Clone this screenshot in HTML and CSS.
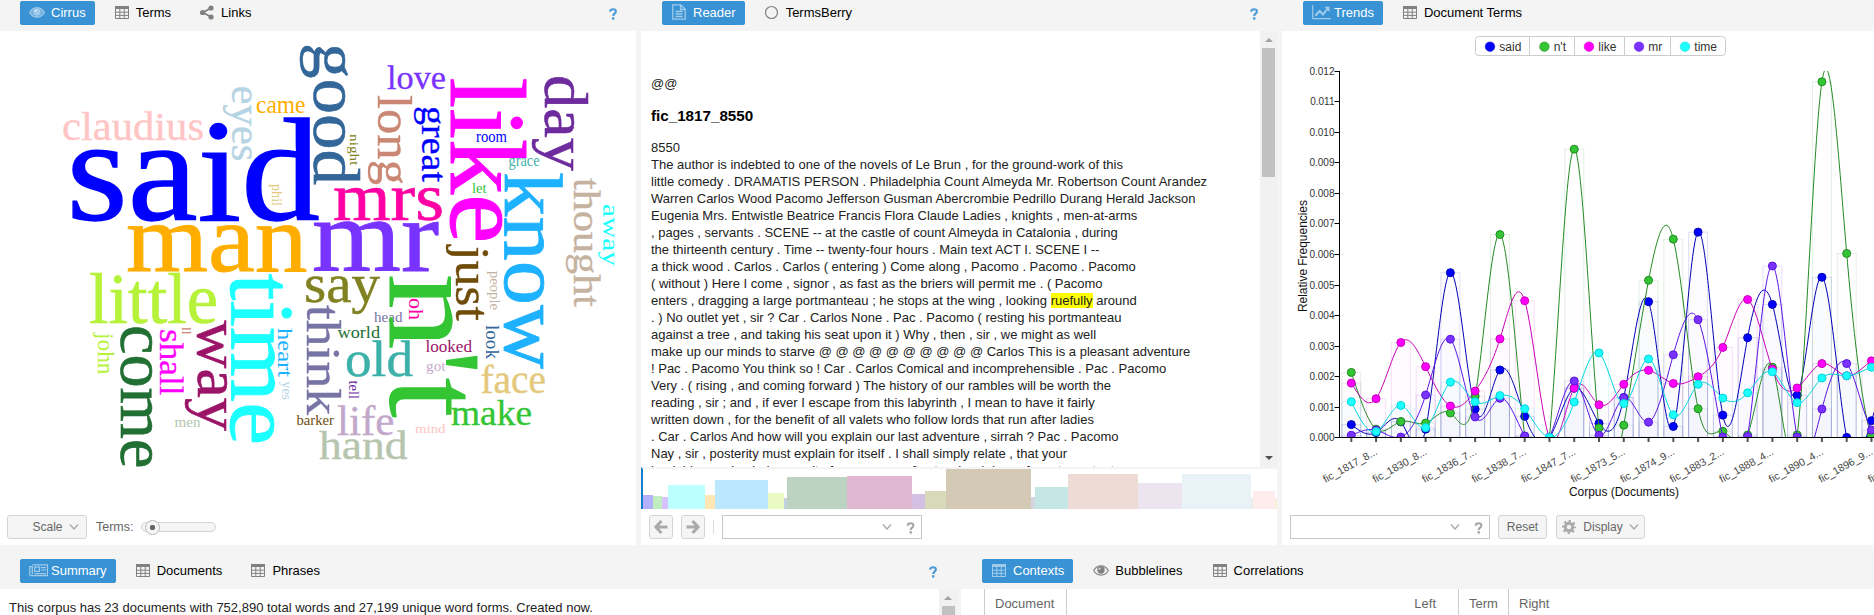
FILE: index.html
```html
<!DOCTYPE html>
<html lang="en">
<head>
<meta charset="utf-8">
<title>Corpus Tools</title>
<link rel="stylesheet" href="styles.css">
</head>
<body>
<svg class="defs" width="0" height="0">
  <symbol id="i-table" viewBox="0 0 16 16"><rect x="1" y="2" width="14" height="3" fill="currentColor"/><path d="M1.5 2.5h13v12h-13zM1.5 8.2h13M1.5 11.4h13M5.8 4v10.5M10.2 4v10.5" fill="none" stroke="currentColor" stroke-width="1"/></symbol>
  <symbol id="i-eye" viewBox="0 0 16 16"><path d="M0 8.5C2 5 5 3.2 8 3.2s6 1.800 8 5.300c-2 3.500-5 5.200-8 5.200S2 12 0 8.500z" fill="currentColor" opacity=".55"/><path d="M.7 8.500C2.500 5.300 5 3.800 8 3.800s5.500 1.500 7.300 4.700c-1.800 3.200-4.300 4.600-7.300 4.600S2.500 11.700.7 8.500z" fill="none" stroke="currentColor" stroke-width="1.100"/><circle cx="8" cy="8" r="3.600" fill="currentColor"/><path d="M6 8a2 2 0 0 1 2-2" fill="none" stroke="#fff" stroke-width=".8"/></symbol>
  <symbol id="i-eye2" viewBox="0 0 16 16"><path d="M.7 8.500C2.500 5.300 5 3.800 8 3.800s5.500 1.500 7.300 4.700c-1.800 3.200-4.300 4.600-7.300 4.600S2.500 11.700.7 8.500z" fill="none" stroke="currentColor" stroke-width="1.200"/><circle cx="8" cy="8" r="3.700" fill="currentColor"/><path d="M6 8a2 2 0 0 1 2-2" fill="none" stroke="#fff" stroke-width=".9"/></symbol>
  <symbol id="i-share" viewBox="0 0 16 16"><path d="M12 4L4 8.500l8 4.500" fill="none" stroke="currentColor" stroke-width="1.800"/><circle cx="12" cy="4" r="2.600" fill="currentColor"/><circle cx="3.600" cy="8.500" r="2.600" fill="currentColor"/><circle cx="12" cy="13" r="2.600" fill="currentColor"/></symbol>
  <symbol id="i-doc" viewBox="0 0 16 16"><path d="M1.800.8h8l4.400 4.400v10H1.800zM9.500 1v4.500H14M4.500 7.500h7M4.500 10h7M4.500 12.500h7" fill="none" stroke="currentColor" stroke-width="1.300"/></symbol>
  <symbol id="i-circle" viewBox="0 0 16 16"><circle cx="7.500" cy="8.500" r="6" fill="none" stroke="currentColor" stroke-width="1.200"/></symbol>
  <symbol id="i-chart" viewBox="0 0 20 16"><path d="M.8 1v14H20" fill="none" stroke="currentColor" stroke-width="1.300"/><path d="M3.500 12l4.500-5 3.500 3.500 5-6" fill="none" stroke="currentColor" stroke-width="2.200"/><path d="M13 2.500h5.500V8z" fill="currentColor"/></symbol>
  <symbol id="i-news" viewBox="0 0 20 16"><path d="M3.500 2.500h16v11.500H2.500a1.500 1.500 0 0 1-1.700-1.500V4.500h2.700v8" fill="none" stroke="currentColor" stroke-width="1.300"/><path d="M6 5h5v4.500H6zM12.500 5.500H18M12.500 8H18M6 11.700h12" fill="none" stroke="currentColor" stroke-width="1.300"/></symbol>
  <symbol id="i-help" viewBox="0 0 8 12"><path d="M1 3.600C1.300 1.900 2.400 1.200 4 1.200c1.800 0 2.900.9 2.900 2.300 0 2.200-2.700 2.100-2.700 4.500" fill="none" stroke="currentColor" stroke-width="2.100"/><rect x="3" y="9.200" width="2.400" height="2.400" fill="currentColor"/></symbol>
  <symbol id="i-chev" viewBox="0 0 10 8"><path d="M1 1.500l4 4.500 4-4.500" fill="none" stroke="currentColor" stroke-width="1.200"/></symbol>
  <symbol id="i-arrow" viewBox="0 0 14 14"><path d="M7.500 1L1.800 7l5.700 6M2.500 7H13.500" fill="none" stroke="currentColor" stroke-width="3"/></symbol>
  <symbol id="i-gear" viewBox="0 0 14 14"><circle cx="7" cy="7" r="3.700" fill="none" stroke="currentColor" stroke-width="2.900"/><circle cx="7" cy="7" r="5.900" fill="none" stroke="currentColor" stroke-width="2.200" stroke-dasharray="2.320 2.314" stroke-dashoffset="1.160"/></symbol>
</svg>

<div class="row row-top">
  <section class="panel cirrus">
    <header class="tabs">
      <div class="tab active"><svg class="ico"><use href="#i-eye"/></svg>Cirrus</div>
      <div class="tab"><svg class="ico"><use href="#i-table"/></svg>Terms</div>
      <div class="tab"><svg class="ico"><use href="#i-share"/></svg>Links</div>
      <svg class="help"><use href="#i-help"/></svg>
    </header>
    <div class="body">
      <svg class="cloud" id="cloud" viewBox="0 31 636 475" width="636" height="475"></svg>
      <footer class="toolbar">
        <div class="btn scale">Scale<svg class="chev"><use href="#i-chev"/></svg></div>
        <span class="terms-label">Terms:</span>
        <div class="slider"><div class="thumb"></div></div>
      </footer>
    </div>
  </section>

  <section class="panel reader">
    <header class="tabs">
      <div class="tab active"><svg class="ico"><use href="#i-doc"/></svg>Reader</div>
      <div class="tab"><svg class="ico"><use href="#i-circle"/></svg>TermsBerry</div>
      <svg class="help"><use href="#i-help"/></svg>
    </header>
    <div class="body">
      <div class="read-area">
        <div class="text">
          <div>@@</div>
          <h3>fic_1817_8550</h3>
          <div>8550</div>
          <div>The author is indebted to one of the novels of Le Brun , for the ground-work of this</div>
          <div>little comedy . DRAMATIS PERSON . Philadelphia Count Almeyda Mr. Robertson Count Arandez</div>
          <div>Warren Carlos Wood Pacomo Jefferson Gusman Abercrombie Pedrillo Durang Herald Jackson</div>
          <div>Eugenia Mrs. Entwistle Beatrice Francis Flora Claude Ladies , knights , men-at-arms</div>
          <div>, pages , servants . SCENE -- at the castle of count Almeyda in Catalonia , during</div>
          <div>the thirteenth century . Time -- twenty-four hours . Main text ACT I. SCENE I --</div>
          <div>a thick wood . Carlos . Carlos ( entering ) Come along , Pacomo . Pacomo . Pacomo</div>
          <div>( without ) Here I come , signor , as fast as the briers will permit me . ( Pacomo</div>
          <div>enters , dragging a large portmanteau ; he stops at the wing , looking <mark>ruefully</mark> around</div>
          <div>. ) No outlet yet , sir ? Car . Carlos None . Pac . Pacomo ( resting his portmanteau</div>
          <div>against a tree , and taking his seat upon it ) Why , then , sir , we might as well</div>
          <div>make up our minds to starve @ @ @ @ @ @ @ @ @ @ Carlos This is a pleasant adventure</div>
          <div>! Pac . Pacomo You think so ! Car . Carlos Comical and incomprehensible . Pac . Pacomo</div>
          <div>Very . ( rising , and coming forward ) The history of our rambles will be worth the</div>
          <div>reading , sir ; and , if ever I escape from this labyrinth , I mean to have it fairly</div>
          <div>written down , for the benefit of all valets who follow lords that run after ladies</div>
          <div>. Car . Carlos And how will you explain our last adventure , sirrah ? Pac . Pacomo</div>
          <div>Nay , sir , posterity must explain for itself . I shall simply relate , that your</div>
          <div>laudable passion led you quite far , so soon after two hard days of most constant</div>
        </div>
        <div class="scroll"><i class="up"></i><i class="bar"></i><i class="down"></i></div>
      </div>
      <div class="docs" id="docs"></div>
      <footer class="toolbar">
        <div class="btn nav"><svg><use href="#i-arrow"/></svg></div>
        <div class="btn nav next"><svg><use href="#i-arrow"/></svg></div>
        <div class="sep"></div>
        <div class="combo"><svg class="chev"><use href="#i-chev"/></svg><svg class="q"><use href="#i-help"/></svg></div>
      </footer>
    </div>
  </section>

  <section class="panel trends">
    <header class="tabs">
      <div class="tab active"><svg class="ico wide"><use href="#i-chart"/></svg>Trends</div>
      <div class="tab"><svg class="ico"><use href="#i-table"/></svg>Document Terms</div>
    </header>
    <div class="body">
      <svg class="chart" id="chart" viewBox="1282 31 592 475" width="592" height="475"></svg>
      <footer class="toolbar">
        <div class="combo"><svg class="chev"><use href="#i-chev"/></svg><svg class="q"><use href="#i-help"/></svg></div>
        <div class="btn reset">Reset</div>
        <div class="btn display"><svg class="gear"><use href="#i-gear"/></svg>Display<svg class="chev"><use href="#i-chev"/></svg></div>
      </footer>
    </div>
  </section>
</div>

<div class="row row-bottom">
  <section class="panel summary">
    <header class="tabs">
      <div class="tab active"><svg class="ico wide"><use href="#i-news"/></svg>Summary</div>
      <div class="tab"><svg class="ico"><use href="#i-table"/></svg>Documents</div>
      <div class="tab"><svg class="ico"><use href="#i-table"/></svg>Phrases</div>
      <svg class="help"><use href="#i-help"/></svg>
    </header>
    <div class="body">
      <div class="sum-text">This corpus has 23 documents with 752,890 total words and 27,199 unique word forms. Created now.</div>
      <div class="scroll"><i class="up"></i><i class="bar"></i></div>
    </div>
  </section>
  <section class="panel contexts">
    <header class="tabs">
      <div class="tab active"><svg class="ico"><use href="#i-table"/></svg>Contexts</div>
      <div class="tab"><svg class="ico"><use href="#i-eye2"/></svg>Bubblelines</div>
      <div class="tab"><svg class="ico"><use href="#i-table"/></svg>Correlations</div>
    </header>
    <div class="body grid-head">
      <div class="col c0"></div>
      <div class="col c1">Document</div>
      <div class="col c2">Left</div>
      <div class="col c3">Term</div>
      <div class="col c4">Right</div>
    </div>
  </section>
</div>
<script src="script.js"></script>
</body>
</html>
```
FILE: styles.css
```css
* { box-sizing: border-box; }
body {
  margin: 0;
  width: 1874px;
  height: 615px;
  overflow: hidden;
  background: #f4f4f4;
  font: 13px/17px "Liberation Sans", Arial, sans-serif;
  color: #000;
}
.defs { position: absolute; }
.row { display: flex; }
.row-top { height: 545px; gap: 5px; }
.row-bottom { height: 70px; gap: 4px; }
.panel { display: flex; flex-direction: column; flex: none; }
.cirrus, .reader { width: 636px; }
.trends { width: 592px; }
.summary { width: 957px; }
.contexts { width: 913px; }
.body { flex: 1; min-height: 0; background: #fff; display: flex; flex-direction: column; }

.tabs { height: 31px; flex: none; display: flex; align-items: flex-start; gap: 10px; padding: 1px 19px 0 21px; }
.cirrus .tabs, .summary .tabs { padding-left: 20px; }
.row-bottom .tabs { height: 44px; padding-top: 14px; }
.tab { height: 24px; padding: 0 9px 2px; display: flex; align-items: center; white-space: nowrap; }
.tab.active { background: #3892d3; color: #fff; border-radius: 2px; }
.ico { width: 16px; height: 16px; margin-right: 6px; color: #808080; flex: none; }
.ico.wide { width: 19px; margin-right: 3px; }
.active .ico { color: #a0cbea; }
.contexts .tabs { gap: 11px; }
.help { width: 8px; height: 12px; margin: 7px 0 0 auto; color: #4a9bd8; }
.row-bottom .help { margin-right: 1px; }

.toolbar { height: 39px; flex: none; display: flex; align-items: center; font-size: 12px; color: #666; padding-top: 3px; }
.btn { height: 24px; background: #f5f5f5; border: 1px solid #d3d3d3; border-radius: 3px; display: flex; align-items: center; justify-content: center; }
.chev { width: 10px; height: 8px; color: #a5a5a5; }
.scale { width: 80px; margin-left: 7px; padding-left: 17px; gap: 6px; }
.terms-label { margin-left: 9px; font-size: 12.5px; width: 38px; }
.slider { width: 75px; height: 10px; margin-left: 7px; border: 1px solid #d3d3d3; border-radius: 5px; background: #f5f5f5; display: flex; align-items: center; }
.thumb { width: 15px; height: 15px; margin-left: 3px; flex: none; border: 1px solid #b8b8b8; border-radius: 50%; background: radial-gradient(circle, #666 0 2.500px, #f5f5f5 3px); }

.cloud, .chart { display: block; flex: none; }
.cloud text { font-family: "Liberation Serif", serif; }

.read-area { height: 436px; flex: none; display: flex; overflow: hidden; }
.text { flex: 1; padding: 44px 0 0 10px; white-space: nowrap; color: #222; }
.text h3 { font-size: 15.200px; line-height: 20px; margin: 14px 0 13px; color: #000; }
.text div { height: 17px; }
mark { background: #ff0; color: inherit; }
.scroll { width: 17px; background: #f1f1f1; display: flex; flex-direction: column; align-items: center; }
.scroll .up { margin-top: 7px; border: 4px solid transparent; border-top: 0; border-bottom-color: #a3a3a3; }
.scroll .bar { margin-top: 6px; width: 13px; height: 129px; background: #c1c1c1; }
.scroll .down { margin: auto 0 7px; border: 4px solid transparent; border-bottom: 0; border-top-color: #505050; }
.docs { height: 42px; flex: none; border-top: 2px solid #f4f4f4; border-left: 2px solid #157fcc; display: flex; align-items: flex-end; overflow: hidden; }
.docs div { flex: none; }
.reader .toolbar { height: 36px; padding: 6px 0 6px 8px; }
.nav { width: 24px; }
.nav svg { width: 14px; height: 14px; color: #aaa; }
.next { margin-left: 8px; }
.next svg { transform: scaleX(-1); }
.sep { width: 1px; height: 14px; background: #ddd; margin: 0 8px; }
.combo { width: 200px; height: 24px; border: 1px solid #c8c8c8; background: #fff; display: flex; align-items: center; justify-content: flex-end; padding-right: 6px; gap: 14px; }
.q { width: 9px; height: 12px; color: #a5a5a5; margin-top: 2px; }
.trends .combo { margin-left: 8px; }
.reset { width: 49px; margin-left: 8px; }
.display { width: 89px; margin-left: 9px; gap: 7px; }
.display .chev { margin-left: -1px; }
.gear { width: 14px; height: 14px; color: #aaa; }

.summary .body { flex-direction: row; }
.sum-text { flex: 1; padding: 10px 0 0 9px; color: #222; }
.summary .scroll { width: 18px; height: 26px; overflow: hidden; }
.summary .scroll .bar { flex: none; }
.grid-head { flex-direction: row; color: #666; }
.col { padding: 6px 10px 0; border-right: 1px solid #ccc; }
.c0 { width: 24px; }
.c1 { width: 82px; }
.c2 { width: 392px; padding-right: 22px; text-align: right; }
.c3 { width: 50px; white-space: nowrap; }
.c4 { border: 0; }

.chart text { font-family: "Liberation Sans", Arial, sans-serif; }
.y-label { font-size: 10px; fill: #333; text-anchor: end; }
.x-label { font-size: 10.500px; fill: #444; text-anchor: middle; }
.axis-title { font-size: 12px; fill: #111; }
.legend-text { font-size: 12px; fill: #333; }
```
FILE: script.js
```js
const NS = 'http://www.w3.org/2000/svg';
function add(parent, tag, attrs, text) {
  const e = document.createElementNS(NS, tag);
  for (const k in attrs) e.setAttribute(k, attrs[k]);
  if (text) e.textContent = text;
  parent.appendChild(e);
  return e;
}

// word, colour, start, end, baseline, size; horizontal words
const across = [
  ['said', '0,0,255', 66.500, 320, 220, 147], ['claudius', '255,197,197', 62, 204, 140, 39],
  ['came', '255,174,0', 256, 305.500, 113, 25], ['love', '121,51,255', 387, 446, 88.700, 33],
  ['mrs', '255,0,164', 333, 444, 220, 67], ['man', '255,174,0', 126, 307.500, 270.700, 97],
  ['mr', '121,51,255', 312, 439, 270.700, 103], ['room', '0,0,255', 476, 507, 142.300, 17],
  ['grace', '61,177,169', 508.500, 539.500, 166, 16.500], ['let', '51,197,51', 472, 486.500, 193, 14],
  ['little', '182,242,58', 89, 218, 323.300, 71], ['say', '128,130,33', 304, 380, 301.700, 54],
  ['head', '119,115,165', 374, 402.500, 322, 14], ['world', '34,111,52', 337.500, 380, 338, 16],
  ['old', '61,177,169', 345, 413, 376, 50], ['looked', '155,20,104', 425.500, 472, 352.300, 16],
  ['got', '194,169,204', 426, 445.500, 370.700, 15], ['face', '228,200,124', 480.500, 546, 392.700, 39],
  ['make', '51,197,51', 451, 532, 424.700, 36], ['life', '194,169,204', 337, 394.500, 435.300, 42],
  ['barker', '111,76,10', 296.500, 334, 425, 14], ['mind', '255,197,197', 415, 445.500, 433.300, 13.500],
  ['hand', '182,197,174', 319, 407.500, 458.700, 40], ['men', '182,197,174', 174.500, 200.500, 427, 15]
];
// words turned a quarter: start and end run down, baseline is an x
const down = [
  ['eyes', '181,212,228', 85.500, 161.500, 232, 39], ['good', '51,102,153', 43, 185, 314, 66],
  ['night', '128,130,33', 134, 165.500, 350, 13], ['long', '202,135,115', 95, 185, 377.500, 48],
  ['great', '0,0,255', 106, 182, 421.600, 36], ['like', '255,0,255', 77.500, 243.500, 451.400, 108],
  ['day', '109,43,157', 75, 171, 545.300, 62], ['thought', '197,179,159', 178, 307, 573.500, 38],
  ['away', '28,255,255', 204, 266, 603.300, 24], ['know', '30,177,255', 172, 369, 504.500, 83],
  ['phil', '228,200,124', 184, 206, 272, 14], ['just', '111,76,10', 246, 321, 456, 48],
  ['people', '197,179,159', 271, 310, 489.500, 14.500], ['come', '34,111,52', 325, 468.500, 121, 66],
  ['john', '182,242,58', 333, 374.500, 98.400, 23], ['shall', '255,0,255', 329, 395.500, 160.400, 34.500],
  ['ll', '202,135,115', 327, 334.500, 182, 12.500], ['way', '155,20,104', 320.500, 431, 197.500, 62],
  ['time', '28,255,255', 273.500, 445, 231.400, 91], ['heart', '30,177,255', 328, 377, 278.400, 21.500],
  ['yes', '181,212,228', 381.500, 400, 282.400, 15], ['think', '119,115,165', 305, 415, 307, 49],
  ['tell', '109,43,157', 380.500, 399, 348.600, 14],
  ['oh', '255,0,164', 298, 320, 409, 20], ['look', '51,102,153', 325, 359, 486, 19]
];
const cloud = document.getElementById('cloud');
function word([w, c, a, b, base, size], turned) {
  add(cloud, 'text', {
    transform: turned ? `translate(${base} ${a}) rotate(90)` : `translate(${a} ${base})`,
    'font-size': size, fill: `rgb(${c})`, stroke: `rgb(${c})`, 'stroke-width': size > 30 ? size * .009 : 0,
    textLength: b - a, lengthAdjust: 'spacingAndGlyphs'
  }, w);
}
across.forEach(w => word(w, false));
down.forEach(w => word(w, true));
// the contraction is spaced letter by letter
const nt = add(cloud, 'text', { transform: 'translate(390 273) rotate(90)', 'font-size': 134, fill: 'rgb(51,197,51)' });
[['n', 0, 77], ["'", 77, 25], ['t', 104, 41]].forEach(([ch, x, w]) =>
  add(nt, 'tspan', { x, textLength: w, lengthAdjust: 'spacingAndGlyphs' }, ch));

// width, height, colour of each document in the reader strip
const docs = [
  [10.200, 14, '#b2b2ff'], [9, 13, '#c1edc1'], [6, 12, '#d7c1ff'], [36.700, 24, '#bbffff'], [10.200, 14, '#ffe6b2'],
  [53, 29, '#bbe7ff'], [16, 16, '#e9fbc3'], [3, 11, '#c2d1e0'], [60, 32, '#bcd3c2'], [64.900, 33, '#e1b8d2'],
  [13, 15, '#d3bfe2'], [21.200, 18, '#d8d9bb'], [84.900, 40, '#d3c9b5'], [4.100, 12, '#d6d5e4'], [33, 22, '#c4e7e5'],
  [69.800, 35, '#eedbd5'], [44, 26, '#ece5f0'], [69, 35, '#e9f2f7'], [2, 11, '#e9eee6'], [22, 18, '#ffecec'], [3, 11, '#f7efd7']
];
const strip = document.getElementById('docs');
docs.forEach(([w, h, c]) => {
  const d = document.createElement('div');
  d.style.cssText = `width:${w}px;height:${h}px;background:${c}`;
  strip.appendChild(d);
});

// trends
const chart = document.getElementById('chart');
const X0 = 1351.300, STEP = 24.770, Y0 = 437.400, UNIT = 30.500;
const series = [
  ['said', '#0000ff', '#0000b2', [.42,.16,.51,.27,5.40,.93,2.21,.69,0,1.61,.46,1.31,4.45,.36,6.73,.73,3.27,4.36,1.38,5.25,0,.55,2.750]],
  ["n't", '#33c533', '#238a23', [2.130,.27,.52,.47,.80,1.350,6.650,.04,0,9.450,.31,.40,5.150,6.500,.94,.20,.08,2.300,.08,11.660,6.030,.03,.13]],
  ['like', '#ff00ff', '#c800b8', [1.780,1.270,3.110,2.320,1.030,1.520,3.230,4.480,0,1.620,1.070,1.740,2.200,1.770,1.990,2.950,4.520,2.240,1.620,2.420,2.020,2.510,2.750]],
  ['mr', '#7933ff', '#5a14e0', [.07,.24,.01,1.390,3.220,.67,1.280,.05,0,1.850,.07,1.300,.50,2.710,3.860,.01,.03,5.620,.01,.93,2.420,.24,.57]],
  ['time', '#1cffff', '#00d4de', [1.170,.19,1.050,.32,1.810,1.170,1.370,.94,0,1.160,2.770,1.110,2.570,.74,1.740,1.290,1.460,2.150,1.140,1.950,2.020,2.300,2.430]]
];
// natural cubic spline on evenly spaced points, as a bezier path
function spline(ys) {
  const n = ys.length, cp = [], dp = [], m = new Array(n).fill(0);
  cp[0] = 0; dp[0] = 0;
  for (let i = 1; i < n - 1; i++) {
    const r = 6 * (ys[i + 1] - 2 * ys[i] + ys[i - 1]);
    const q = 4 - cp[i - 1];
    cp[i] = 1 / q;
    dp[i] = (r - dp[i - 1]) / q;
  }
  for (let i = n - 2; i > 0; i--) m[i] = dp[i] - cp[i] * m[i + 1];
  let d = `M${X0} ${ys[0]}`;
  for (let i = 0; i < n - 1; i++) {
    const s0 = ys[i + 1] - ys[i] - (2 * m[i] + m[i + 1]) / 6;
    const s1 = ys[i + 1] - ys[i] + (m[i] + 2 * m[i + 1]) / 6;
    const x = X0 + i * STEP;
    d += `C${x + STEP / 3} ${ys[i] + s0 / 3} ${x + STEP * 2 / 3} ${ys[i + 1] - s1 / 3} ${x + STEP} ${ys[i + 1]}`;
  }
  return d;
}
const clip = add(chart, 'clipPath', { id: 'plot' });
add(clip, 'rect', { x: 1339, y: 71, width: 535, height: 366.500 });
const plot = add(chart, 'g', { 'clip-path': 'url(#plot)' });
series.forEach(([, c, dark, v]) => v.forEach((val, i) => add(plot, 'rect', {
  x: X0 + i * STEP - 9.500, y: Y0 - val * UNIT, width: 19, height: val * UNIT,
  fill: c, 'fill-opacity': .012, stroke: dark, 'stroke-opacity': .12
})));
series.forEach(([, c, dark, v]) => {
  const ys = v.map(a => Y0 - a * UNIT);
  add(plot, 'path', { d: spline(ys), fill: 'none', stroke: dark, 'stroke-width': 1 });
  ys.forEach((y, i) => add(plot, 'circle', { cx: X0 + i * STEP, cy: y, r: 4, fill: c, stroke: dark, 'stroke-width': 1 }));
});
add(chart, 'path', { d: 'M1339.500 71V437.500H1874', fill: 'none', stroke: '#000' });
for (let i = 0; i <= 12; i++) {
  const y = Math.round(Y0 - i * UNIT - .4) + .500;
  add(chart, 'path', { d: `M1334.500 ${y}h5`, stroke: '#000' });
  add(chart, 'text', { class: 'y-label', x: 1334.500, y: y + 3 }, (i / 1000).toFixed(3));
}
for (let i = 0; i < 22; i++) {
  add(chart, 'path', { d: `M${X0 + i * STEP} 438v4`, stroke: '#555', 'stroke-width': 2 });
}
['1817_8', '1830_8', '1836_7', '1838_7', '1847_7', '1873_5', '1874_9', '1883_2', '1888_4', '1890_4', '1896_9', '1900_3'].forEach((t, i) => {
  add(chart, 'text', { class: 'x-label', transform: `translate(${X0 + i * 2 * STEP + .5} 468.500) rotate(-29)` }, `fic_${t}...`);
});
add(chart, 'text', { class: 'axis-title', x: 1569, y: 495.500, textLength: 110 }, 'Corpus (Documents)');
add(chart, 'text', { class: 'axis-title', transform: 'translate(1307 312) rotate(-90)', textLength: 112 }, 'Relative Frequencies');
add(chart, 'rect', { x: 1475.500, y: 36.500, width: 250, height: 19, rx: 3, fill: '#fff', stroke: '#ccc' });
[1529.500, 1574.500, 1624.500, 1670.500].forEach(x => add(chart, 'path', { d: `M${x} 36.500v19`, stroke: '#ccc' }));
[1490, 1544.400, 1589, 1639, 1685].forEach((x, i) => {
  add(chart, 'circle', { cx: x, cy: 46.700, r: 4.800, fill: series[i][1], stroke: series[i][2], 'stroke-width': .5 });
  add(chart, 'text', { class: 'legend-text', x: x + 9.300, y: 51 }, series[i][0]);
});
```
